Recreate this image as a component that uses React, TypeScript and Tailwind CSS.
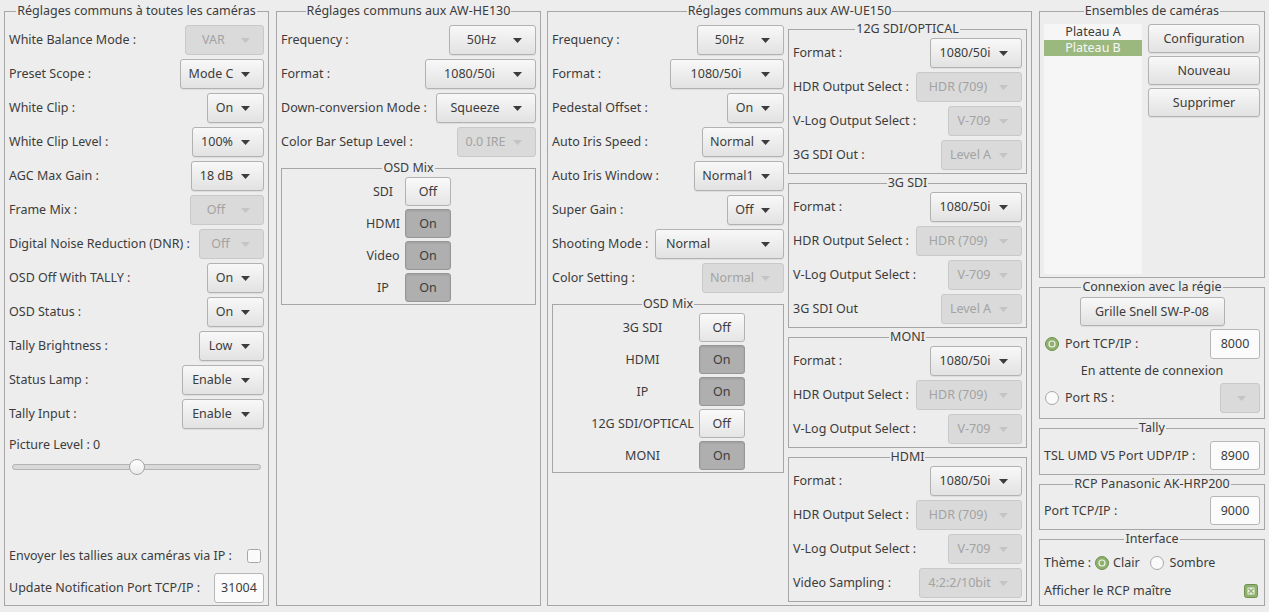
import { Fragment } from "react";
import type { ReactNode } from "react";
import clsx from "clsx";

type ComboProps = { value: string; w: string; disabled?: boolean; left?: boolean };

function Arrow({ disabled }: { disabled?: boolean }) {
  return (
    <svg width="9" height="5" viewBox="0 0 9 5" className={clsx("shrink-0", disabled ? "text-[#c4c4c4]" : "text-[#3c3c3c]")}>
      <path d="M0 0h9L4.5 5z" fill="currentColor" />
    </svg>
  );
}

function Combo({ value, w, disabled, left }: ComboProps) {
  return (
    <div
      className={clsx(
        "flex h-[30px] shrink-0 items-center rounded-[3px] border pr-[13px]",
        w,
        disabled
          ? "border-[#c9c9c9] bg-[#dadada] text-[#a3a3a3]"
          : "border-[#b2b2b2] bg-linear-to-b from-[#f8f8f8] to-[#e2e2e2] text-[#3c3c3c] shadow-[0_1px_1px_rgba(0,0,0,0.07)]",
      )}
    >
      <span className={clsx("flex-1 whitespace-nowrap", left ? "pl-2.5 text-left" : "text-center")}>{value}</span>
      <Arrow disabled={disabled} />
    </div>
  );
}

function Row({ label, children }: { label: string; children: ReactNode }) {
  return (
    <div className="flex h-[30px] shrink-0 items-center justify-between gap-1">
      <span className="whitespace-nowrap">{label}</span>
      {children}
    </div>
  );
}

function Frame({ title, className, children }: { title: string; className?: string; children: ReactNode }) {
  return (
    <fieldset className={clsx("min-w-0 border border-[#a6a6a6] px-1", className)}>
      <legend className="mx-auto px-px leading-4 whitespace-nowrap">{title}</legend>
      {children}
    </fieldset>
  );
}

function Toggle({ on }: { on: boolean }) {
  return (
    <div
      className={clsx(
        "flex h-[29px] w-[46px] items-center justify-center rounded-[3px] border",
        on
          ? "border-[#979797] bg-[#afafaf] shadow-[inset_0_1px_2px_rgba(0,0,0,0.1)]"
          : "border-[#b2b2b2] bg-linear-to-b from-[#fafafa] to-[#e5e5e5]",
      )}
    >
      {on ? "On" : "Off"}
    </div>
  );
}

function OsdMix({ items }: { items: [string, boolean][] }) {
  return (
    <Frame title="OSD Mix" className="-mt-px pb-[2px]">
      <div className="grid grid-cols-[auto_46px] items-center justify-center gap-x-[5px] gap-y-[3px] pt-px">
        {items.map(([label, on]) => (
          <Fragment key={label}>
            <span className="text-center whitespace-nowrap">{label}</span>
            <Toggle on={on} />
          </Fragment>
        ))}
      </div>
    </Frame>
  );
}

function Entry({ value, h = "h-[30px]" }: { value: string; h?: string }) {
  return (
    <div className={clsx("flex w-[50px] shrink-0 items-center justify-center rounded-[3px] border border-[#b6b6b6] bg-[#fbfbfb]", h)}>
      {value}
    </div>
  );
}

function Button({ children, className }: { children: ReactNode; className?: string }) {
  return (
    <div
      className={clsx(
        "flex h-[29px] items-center justify-center rounded-[3px] border border-[#b2b2b2] bg-linear-to-b from-[#f8f8f8] to-[#e2e2e2] shadow-[0_1px_1px_rgba(0,0,0,0.07)] whitespace-nowrap",
        className,
      )}
    >
      {children}
    </div>
  );
}

function Radio({ checked }: { checked?: boolean }) {
  return (
    <svg width="14" height="14" viewBox="0 0 14 14" className="shrink-0">
      {checked ? (
        <>
          <circle cx="7" cy="7" r="6.5" fill="#8fb06f" stroke="#6f914f" />
          <circle cx="7" cy="7" r="3.6" fill="#eef3e8" />
          <circle cx="7" cy="7" r="2.4" fill="#8fb06f" />
        </>
      ) : (
        <circle cx="7" cy="7" r="6.5" fill="#fafafa" stroke="#a8a8a8" />
      )}
    </svg>
  );
}

function Check({ checked }: { checked?: boolean }) {
  return (
    <svg width="14" height="14" viewBox="0 0 14 14" className="shrink-0">
      {checked ? (
        <>
          <rect x="0.5" y="0.5" width="13" height="13" rx="2" fill="#8fb06f" stroke="#6f914f" />
          <rect x="3.5" y="3.5" width="7" height="7" fill="#eef3e8" />
          <path d="M4.5 4.5l5 5M9.5 4.5l-5 5" stroke="#8fb06f" strokeWidth="1.4" />
        </>
      ) : (
        <rect x="0.5" y="0.5" width="13" height="13" rx="2" fill="#fafafa" stroke="#a8a8a8" />
      )}
    </svg>
  );
}

function Sub({ title, children }: { title: string; children: ReactNode }) {
  return (
    <Frame title={title} className="pb-[3px]">
      <div className="flex flex-col gap-1 pt-px">{children}</div>
    </Frame>
  );
}

export default function App() {
  return (
    <div className="flex h-[612px] w-[1269px] bg-[#ededed] pt-[3px] pb-[6px] pl-1 font-['Noto_Sans',sans-serif] text-[12.5px] leading-4 text-[#3c3c3c]">
      <Frame title="Réglages communs à toutes les caméras" className="flex w-[265px] flex-col">
        <div className="flex flex-1 flex-col gap-1 pt-[6px] pb-[2px]">
          <Row label="White Balance Mode :"><Combo value="VAR" w="w-[79px]" disabled /></Row>
          <Row label="Preset Scope :"><Combo value="Mode C" w="w-[84px]" /></Row>
          <Row label="White Clip :"><Combo value="On" w="w-[57px]" /></Row>
          <Row label="White Clip Level :"><Combo value="100%" w="w-[72px]" /></Row>
          <Row label="AGC Max Gain :"><Combo value="18 dB" w="w-[73px]" /></Row>
          <Row label="Frame Mix :"><Combo value="Off" w="w-[74px]" disabled /></Row>
          <Row label="Digital Noise Reduction (DNR) :"><Combo value="Off" w="w-[65px]" disabled /></Row>
          <Row label="OSD Off With TALLY :"><Combo value="On" w="w-[57px]" /></Row>
          <Row label="OSD Status :"><Combo value="On" w="w-[57px]" /></Row>
          <Row label="Tally Brightness :"><Combo value="Low" w="w-[65px]" /></Row>
          <Row label="Status Lamp :"><Combo value="Enable" w="w-[82px]" /></Row>
          <Row label="Tally Input :"><Combo value="Enable" w="w-[82px]" /></Row>
          <div className="flex h-6 items-center">Picture Level : 0</div>
          <div className="relative mx-[3px] -mt-0.5 flex h-4 items-center">
            <div className="h-[6px] w-full rounded-full border border-[#b4b4b4] bg-[#d9d9d9]" />
            <div className="absolute top-0 left-1/2 h-4 w-4 -translate-x-1/2 rounded-full border border-[#a4a4a4] bg-linear-to-b from-white to-[#ebebeb]" />
          </div>
          <div className="flex-1" />
          <div className="flex h-[26px] items-center justify-between pr-[3px]">
            <span className="whitespace-nowrap">Envoyer les tallies aux caméras via IP :</span>
            <Check />
          </div>
          <Row label="Update Notification Port TCP/IP :"><Entry value="31004" /></Row>
        </div>
      </Frame>

      <Frame title="Réglages communs aux AW-HE130" className="ml-[7px] flex w-[265px] flex-col">
        <div className="flex flex-col gap-1 pt-[6px]">
          <Row label="Frequency :"><Combo value="50Hz" w="w-[87px]" /></Row>
          <Row label="Format :"><Combo value="1080/50i" w="w-[111px]" /></Row>
          <Row label="Down-conversion Mode :"><Combo value="Squeeze" w="w-[100px]" /></Row>
          <Row label="Color Bar Setup Level :"><Combo value="0.0 IRE" w="w-[79px]" disabled /></Row>
          <OsdMix
            items={[
              ["SDI", false],
              ["HDMI", true],
              ["Video", true],
              ["IP", true],
            ]}
          />
        </div>
      </Frame>

      <Frame title="Réglages communs aux AW-UE150" className="ml-[6px] flex w-[485px] flex-col">
        <div className="flex flex-1 gap-1">
          <div className="flex w-[232px] flex-col gap-1 pt-[6px]">
            <Row label="Frequency :"><Combo value="50Hz" w="w-[87px]" /></Row>
            <Row label="Format :"><Combo value="1080/50i" w="w-[114px]" /></Row>
            <Row label="Pedestal Offset :"><Combo value="On" w="w-[57px]" /></Row>
            <Row label="Auto Iris Speed :"><Combo value="Normal" w="w-[82px]" /></Row>
            <Row label="Auto Iris Window :"><Combo value="Normal1" w="w-[90px]" /></Row>
            <Row label="Super Gain :"><Combo value="Off" w="w-[57px]" /></Row>
            <Row label="Shooting Mode :"><Combo value="Normal" w="w-[129px]" left /></Row>
            <Row label="Color Setting :"><Combo value="Normal" w="w-[82px]" disabled /></Row>
            <OsdMix
              items={[
                ["3G SDI", false],
                ["HDMI", true],
                ["IP", true],
                ["12G SDI/OPTICAL", false],
                ["MONI", true],
              ]}
            />
          </div>
          <div className="flex flex-1 flex-col gap-px pt-[2px]">
            <Sub title="12G SDI/OPTICAL">
              <Row label="Format :"><Combo value="1080/50i" w="w-[92px]" /></Row>
              <Row label="HDR Output Select :"><Combo value="HDR (709)" w="w-[106px]" disabled /></Row>
              <Row label="V-Log Output Select :"><Combo value="V-709" w="w-[74px]" disabled /></Row>
              <Row label="3G SDI Out :"><Combo value="Level A" w="w-[81px]" disabled /></Row>
            </Sub>
            <Sub title="3G SDI">
              <Row label="Format :"><Combo value="1080/50i" w="w-[92px]" /></Row>
              <Row label="HDR Output Select :"><Combo value="HDR (709)" w="w-[106px]" disabled /></Row>
              <Row label="V-Log Output Select :"><Combo value="V-709" w="w-[74px]" disabled /></Row>
              <Row label="3G SDI Out"><Combo value="Level A" w="w-[81px]" disabled /></Row>
            </Sub>
            <Sub title="MONI">
              <Row label="Format :"><Combo value="1080/50i" w="w-[92px]" /></Row>
              <Row label="HDR Output Select :"><Combo value="HDR (709)" w="w-[106px]" disabled /></Row>
              <Row label="V-Log Output Select :"><Combo value="V-709" w="w-[74px]" disabled /></Row>
            </Sub>
            <Sub title="HDMI">
              <Row label="Format :"><Combo value="1080/50i" w="w-[92px]" /></Row>
              <Row label="HDR Output Select :"><Combo value="HDR (709)" w="w-[106px]" disabled /></Row>
              <Row label="V-Log Output Select :"><Combo value="V-709" w="w-[74px]" disabled /></Row>
              <Row label="Video Sampling :"><Combo value="4:2:2/10bit" w="w-[103px]" disabled /></Row>
            </Sub>
          </div>
        </div>
      </Frame>

      <div className="ml-[7px] flex w-[226px] flex-col gap-px">
        <Frame title="Ensembles de caméras" className="pb-[3px]">
          <div className="flex gap-[6px] pt-[5px]">
            <div className="h-[250px] w-[98px] bg-[#f6f6f6]">
              <div className="h-4 text-center">Plateau A</div>
              <div className="h-4 bg-[#9bb97e] text-center text-[#f7f7f7]">Plateau B</div>
            </div>
            <div className="flex flex-1 flex-col gap-[3px]">
              <Button>Configuration</Button>
              <Button>Nouveau</Button>
              <Button>Supprimer</Button>
            </div>
          </div>
        </Frame>

        <Frame title="Connexion avec la régie" className="pb-[5px]">
          <div className="flex flex-col gap-[3px] pt-[2px]">
            <Button className="mx-auto w-[145px]">Grille Snell SW-P-08</Button>
            <div className="flex h-[30px] items-center justify-between">
              <span className="flex items-center gap-1.5 pl-px"><Radio checked />Port TCP/IP :</span>
              <Entry value="8000" />
            </div>
            <div className="flex h-[18px] items-center justify-center">En attente de connexion</div>
            <div className="flex h-[30px] items-center justify-between">
              <span className="flex items-center gap-1.5 pl-px"><Radio />Port RS :</span>
              <Combo value="" w="w-[40px]" disabled />
            </div>
          </div>
        </Frame>

        <Frame title="Tally" className="pb-1">
          <div className="mt-[5px] flex h-[29px] items-center justify-between">
            <span>TSL UMD V5 Port UDP/IP :</span>
            <Entry value="8900" h="h-[29px]" />
          </div>
        </Frame>

        <Frame title="RCP Panasonic AK-HRP200" className="pb-1">
          <div className="mt-1 flex h-[29px] items-center justify-between">
            <span>Port TCP/IP :</span>
            <Entry value="9000" h="h-[29px]" />
          </div>
        </Frame>

        <Frame title="Interface" className="flex-1 pb-px">
          <div className="flex flex-col gap-[2px] pt-[2px]">
            <div className="flex h-7 items-center">
              <span className="mr-1">Thème :</span>
              <Radio checked />
              <span className="mr-[10px] ml-1">Clair</span>
              <Radio />
              <span className="ml-1.5">Sombre</span>
            </div>
            <div className="flex h-6 items-center justify-between pr-0.5">
              <span>Afficher le RCP maître</span>
              <Check checked />
            </div>
          </div>
        </Frame>
      </div>
    </div>
  );
}
